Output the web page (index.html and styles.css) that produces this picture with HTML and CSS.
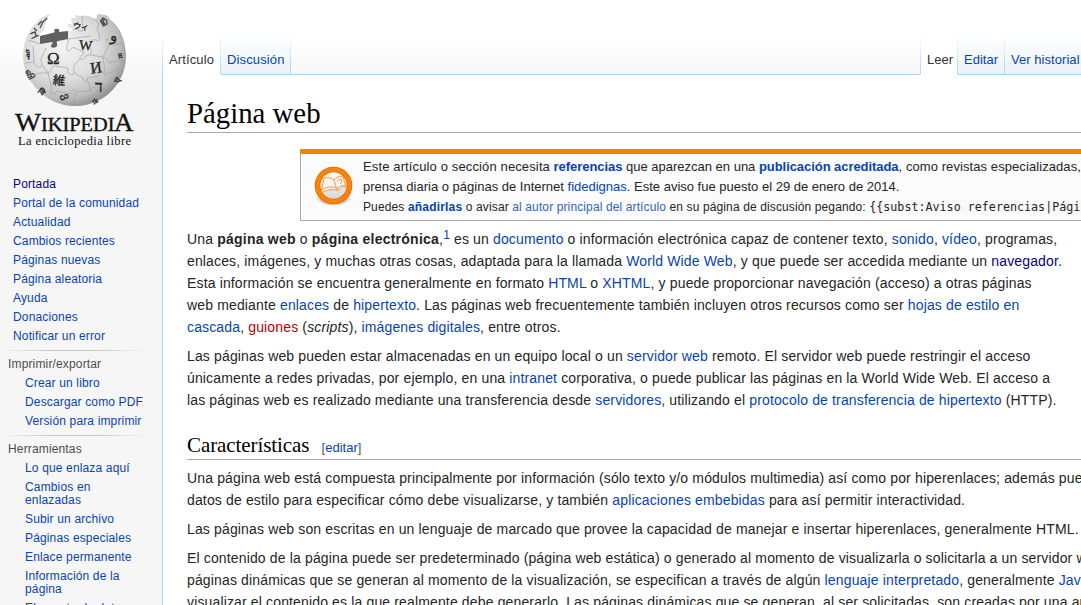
FILE: index.html
```html
<!DOCTYPE html>
<html lang="es">
<head>
<meta charset="utf-8">
<title>Página web - Wikipedia, la enciclopedia libre</title>
<link rel="stylesheet" href="styles.css">
</head>
<body>
<div class="page">
  <aside class="sidebar">
    <a class="logo" href="#">
      <svg width="162" height="160" viewBox="0 0 162 160" role="img" aria-label="Wikipedia">
        <defs>
          <radialGradient id="ball" cx="0.38" cy="0.36" r="0.7">
            <stop offset="0" stop-color="#f4f4f4"/>
            <stop offset="0.5" stop-color="#dedede"/>
            <stop offset="0.8" stop-color="#bcbcbc"/>
            <stop offset="1" stop-color="#858585"/>
          </radialGradient>
        </defs>
        <path d="M50.500 14 C38 17 27 31 24 46 C18 76 43 106 75 106 C105 106 127 82 126 54 C125 39 120 28 112 21 C109 19 108 15 105 15 L98 14 C96 16 98 18 95 19 C89 15 84 15 79 16 C77 14 74 15 76 18 L71 18 L72 24 C69 23 66 25 68 27 C70 29 73 26 72 31 L58 33 L40 36 C39 33 43 32 45 28 C44 25 46 22 48 20 C47 17 49 17 50.500 14Z" fill="url(#ball)"/>
        <path d="M40 36 L54 32.500 C56 32 53 30 55 29 C58 28 60 29 59 32 L68 31 L68 39 L58 41 C55 42 58 44 57 46 C55 48.500 51 48 51 46 C51 44 54 43 52 42 L40 44Z" fill="#606060"/>
        <g class="seam">
          <path d="M28 40 L40 44 M68 39 C69 45 65 47 67 50 C72 53 70 46 75 48 L84 52 C83 57 79 55 80 59 C85 61 84 54 91 55 L103 57 M82 16 C82 24 84 27 82 31 C78 32 77 28 73 30 M91 54 C92 48 88 47 91 41 C96 37 98 44 100 38 L97 28 C101 24 96 21 95 19 M68 39 L91 36"/>
          <path d="M25 63 L34 62 C36 66 38 69 42 66 C43 62 39 61 42 57 C45 51 43 54 46 48 M43 66 L48 73 C53 70 50 67 55 66 L68 68 C66 74 72 77 74 73 C75 70 72 70 75 64 L80 59 M30 80 C37 77 34 74 40 73 L48 73 M48 73 L52 89 C47 94 55 95 57 91 L70 94 C70 89 74 89 76 92 L91 91 C91 85 97 86 98 94 L110 84"/>
          <path d="M74 73 L83 78 C84 84 89 83 87 78 L99 76 C98 70 102 68 105 75 L119 69 M103 57 L105 73 M103 57 C109 59 106 64 112 62 L124 60 M103 57 L109 45 C104 41 107 34 111 44 L123 44 M87 79 L91 91 M76 93 L73 104 M99 92 L94 101 M34 62 L33 46"/>
        </g>
        <g class="glyphs">
          <text x="47" y="64" font-size="17">Ω</text>
          <text x="79" y="50" font-size="14" transform="rotate(4 85 45)">W</text>
          <text x="90" y="73" font-size="16" transform="rotate(-8 96 67)">И</text>
          <text x="53" y="85" font-size="12.500" transform="rotate(5 60 80)">維</text>
          <text x="95" y="92" font-size="16">ד</text>
          <text x="73" y="29" font-size="8" transform="rotate(8 79 26)">ウィ</text>
          <text x="110" y="41" font-size="15">و</text>
          <text x="29" y="38" font-size="9" transform="rotate(-25 34 34)">ユ</text>
          <text x="24" y="58" font-size="10" transform="rotate(85 29 54)">ሙ</text>
          <text x="26" y="78" font-size="9" transform="rotate(65 31 74)">வி</text>
          <text x="62" y="102" font-size="11" transform="rotate(70 67 98)">ვ</text>
          <text x="117" y="59" font-size="7" transform="rotate(80 121 57)">ш</text>
          <text x="114" y="81" font-size="9" transform="rotate(-60 119 78)">ए</text>
          <text x="92" y="103" font-size="7" transform="rotate(-25 96 100)">ik</text>
          <text x="38" y="95" font-size="8" transform="rotate(42 42 92)">वि</text>
        </g>
        <path class="mark" d="M100.500 21 L103 18 L106.500 20 L107 24 L103.500 26 Z M101 20 L106 25 M104 18 L103 26 M38 25 L42 21 M40 28 L43 22 L47 18 M34 28 L37 31"/>
        <g class="wordmark">
          <text x="15" y="131" font-size="26" textLength="26" lengthAdjust="spacingAndGlyphs">W</text>
          <text x="41" y="131" font-size="19.500" textLength="73.500" lengthAdjust="spacingAndGlyphs">IKIPEDI</text>
          <text x="114" y="131" font-size="26" textLength="19.500" lengthAdjust="spacingAndGlyphs">A</text>
        </g>
        <text class="tagline" x="18" y="145" font-size="12.500" textLength="113">La enciclopedia libre</text>
      </svg>
    </a>
    <ul class="menu menu-main">
      <li><a class="visited" href="#">Portada</a></li>
      <li><a href="#">Portal de la comunidad</a></li>
      <li><a href="#">Actualidad</a></li>
      <li><a href="#">Cambios recientes</a></li>
      <li><a href="#">Páginas nuevas</a></li>
      <li><a href="#">Página aleatoria</a></li>
      <li><a href="#">Ayuda</a></li>
      <li><a href="#">Donaciones</a></li>
      <li><a href="#">Notificar un error</a></li>
    </ul>
    <section class="portal">
      <h3>Imprimir/exportar</h3>
      <ul class="menu">
        <li><a href="#">Crear un libro</a></li>
        <li><a href="#">Descargar como PDF</a></li>
        <li><a href="#">Versión para imprimir</a></li>
      </ul>
    </section>
    <section class="portal">
      <h3>Herramientas</h3>
      <ul class="menu">
        <li><a href="#">Lo que enlaza aquí</a></li>
        <li><a href="#">Cambios en<br>enlazadas</a></li>
        <li><a href="#">Subir un archivo</a></li>
        <li><a href="#">Páginas especiales</a></li>
        <li><a href="#">Enlace permanente</a></li>
        <li><a href="#">Información de la<br>página</a></li>
        <li><a href="#">Elemento de datos</a></li>
      </ul>
    </section>
  </aside>
  <div class="main">
    <nav class="tabs">
      <a class="tab selected tab-article" href="#">Artículo</a>
      <a class="tab tab-talk" href="#">Discusión</a>
      <span class="tab-space"></span>
      <a class="tab selected tab-read" href="#">Leer</a>
      <a class="tab tab-edit" href="#">Editar</a>
      <a class="tab tab-history" href="#">Ver historial</a>
    </nav>
    <main class="content">
      <h1>Página web</h1>
      <div class="notice">
        <svg class="notice-icon" width="42" height="44" viewBox="0 0 42 44" aria-hidden="true">
          <defs>
            <radialGradient id="shade"><stop offset="0.6" stop-color="#777" stop-opacity="0.7"/><stop offset="1" stop-color="#999" stop-opacity="0"/></radialGradient>
            <linearGradient id="disc" x1="0" y1="0" x2="0" y2="1"><stop offset="0" stop-color="#fff"/><stop offset="1" stop-color="#d4d4d4"/></linearGradient>
          </defs>
          <ellipse cx="20.500" cy="34" rx="18" ry="8" fill="url(#shade)"/>
          <circle cx="20.500" cy="21.500" r="16" fill="url(#disc)" stroke="#d96a00" stroke-width="5.600"/>
          <circle cx="20.500" cy="21.500" r="16" fill="none" stroke="#ff8208" stroke-width="4.200"/>
          <path d="M11 14 C15 13 18 14 21 16 C23 13 27 12 30 13 L33 23 C29 22 27 23 25 27 C20 24 14 26 9 28.500 L8.500 26 Z M21 16 L24 26 M9 26 C15 22 20 22 24.500 25 C27 21 30 21 33 22 M24 17 L28 15 L29 18 L27 20" fill="#f8f4f0" stroke="#f89a40" stroke-width="1"/>
        </svg>
        <div class="notice-text">
          <span class="loose">Este artículo o sección necesita</span> <a href="#"><b>referencias</b></a> que aparezcan en una <a href="#"><b>publicación acreditada</b></a><span class="loose-end">, como revistas especializadas,</span><br>
          prensa diaria o páginas de Internet <a href="#">fidedignas</a>. Este aviso fue puesto el 29 de enero de 2014.<br>
          <span class="notice-small">Puedes <a href="#"><b>añadirlas</b></a> o avisar <a class="external" href="#">al autor principal del artículo</a> en su página de discusión pegando: <code>{{subst:Aviso referencias|Página web}}</code></span>
        </div>
      </div>
      <p>Una <b>página web</b> o <b>página electrónica</b>,<sup><a href="#">1</a></sup> es un <a href="#">documento</a> o información electrónica capaz de contener texto, <a href="#">sonido</a>, <a href="#">vídeo</a>, programas,<br>
      enlaces, imágenes, y muchas otras cosas, adaptada para la llamada <a href="#">World Wide Web</a>, y que puede ser accedida mediante un <a class="visited" href="#">navegador</a>.<br>
      Esta información se encuentra generalmente en formato <a href="#">HTML</a> o <a href="#">XHTML</a>, y puede proporcionar navegación (acceso) a otras páginas<br>
      web mediante <a href="#">enlaces</a> de <a href="#">hipertexto</a>. Las páginas web frecuentemente también incluyen otros recursos como ser <a href="#">hojas de estilo en<br>
      cascada</a>, <a class="missing" href="#">guiones</a> (<i>scripts</i>), <a href="#">imágenes digitales</a>, entre otros.</p>
      <p>Las páginas web pueden estar almacenadas en un equipo local o un <a href="#">servidor web</a> remoto. El servidor web puede restringir el acceso<br>
      únicamente a redes privadas, por ejemplo, en una <a href="#">intranet</a> corporativa, o puede publicar las páginas en la World Wide Web. El acceso a<br>
      las páginas web es realizado mediante una transferencia desde <a href="#">servidores</a>, utilizando el <a href="#">protocolo de transferencia de hipertexto</a> (HTTP).</p>
      <h2>Características <span class="edit">[<a href="#">editar</a>]</span></h2>
      <p>Una página web está compuesta principalmente por información (sólo texto y/o módulos multimedia) así como por hiperenlaces; además puede<br>
      datos de estilo para especificar cómo debe visualizarse, y también <a href="#">aplicaciones embebidas</a> para así permitir interactividad.</p>
      <p>Las páginas web son escritas en un lenguaje de marcado que provee la capacidad de manejar e insertar hiperenlaces, generalmente HTML.</p>
      <p>El contenido de la página puede ser predeterminado (página web estática) o generado al momento de visualizarla o solicitarla a un servidor web.<br>
      páginas dinámicas que se generan al momento de la visualización, se especifican a través de algún <a href="#">lenguaje interpretado</a>, generalmente <a href="#">JavaScript</a><br>
      visualizar el contenido es la que realmente debe generarlo. Las páginas dinámicas que se generan, al ser solicitadas, son creadas por una aplicación</p>
    </main>
  </div>
</div>
</body>
</html>
```

FILE: styles.css
```css
* { box-sizing: border-box; }
body {
  margin: 0;
  height: 605px;
  overflow: hidden;
  background: #f6f6f6 linear-gradient(#fff 40px, #f6f6f6 80px) top / 100% 80px no-repeat;
  font-family: "Liberation Sans", Arial, sans-serif;
  font-size: 14px;
  color: #252525;
}
a { color: #0645ad; text-decoration: none; }
a.visited { color: #0b0080; }
a.missing { color: #ba0000; }
a.external { color: #36b; }

.page { display: flex; height: 605px; overflow: hidden; }

/* Left column */
.sidebar { flex: none; width: 162px; font-size: 12px; line-height: 13px; letter-spacing: 0.15px; white-space: nowrap; }
.logo, .logo svg { display: block; letter-spacing: 0; }
.seam path { fill: none; stroke: #a2a2a2; stroke-width: 0.7; }
.glyphs { font-family: "Liberation Serif", "DejaVu Serif", "DejaVu Sans", "Noto Sans CJK JP", serif; fill: #222; stroke: #222; stroke-width: 0.3; }
.mark { fill: none; stroke: #444; stroke-width: 1.2; }
.wordmark { font-family: "Liberation Serif", serif; fill: #111; stroke: #111; stroke-width: 0.35; }
.tagline { font-family: "Liberation Serif", serif; fill: #111; }
.menu { list-style: none; margin: 0; padding: 0 0 0 25px; }
.menu li { padding: 3px 0; }
.menu-main { padding: 15px 0 4px 13px; }
.portal { padding-bottom: 4px; background: linear-gradient(90deg, rgba(200,200,200,0), #c8c8c8 33%, #c8c8c8 66%, rgba(200,200,200,0)) 0 0 / 148px 1px no-repeat; }
.portal h3 { margin: 0; padding: 8px 0 3px 8px; font-size: 12px; font-weight: normal; color: #4d4d4d; }

/* Right column */
.main { flex: 1; min-width: 0; display: flex; flex-direction: column; }
.tabs {
  flex: none;
  display: flex;
  height: 75px;
  padding-top: 35px;
  font-size: 13px;
  line-height: 50px;
  white-space: nowrap;
  background: linear-gradient(rgba(167,215,249,0), #a7d7f9) 0 35px / 1px 40px no-repeat;
}
.tab {
  flex: none;
  padding: 0 0 0 6px;
  border-bottom: 1px solid #a7d7f9;
  background: linear-gradient(rgba(167,215,249,0), #a7d7f9) right / 1px 100% no-repeat, linear-gradient(#fff, #e8f2f8);
}
.tab.selected {
  padding-left: 7px;
  color: #333;
  border-bottom-color: #fff;
  background: linear-gradient(rgba(167,215,249,0), #a7d7f9) left / 1px 100% no-repeat, linear-gradient(rgba(167,215,249,0), #a7d7f9) right / 1px 100% no-repeat, #fff;
}
.tab-article { width: 59px; letter-spacing: 0.13px; }
.tab-talk { width: 70px; letter-spacing: 0.13px; }
.tab-space { flex: 1; border-bottom: 1px solid #a7d7f9; }
.tab-read { width: 38px; }
.tab-edit { width: 47px; }
.tab-history { width: 76px; margin-right: 0; background: linear-gradient(#fff, #e8f2f8); letter-spacing: 0.05px; }
.content {
  flex: 1;
  min-height: 0;
  overflow: hidden;
  padding: 20px 0 0 24px;
  border-left: 1px solid #a7d7f9;
  background: #fff;
  white-space: nowrap;
  line-height: 22px;
}
h1, h2 { font-family: "Liberation Serif", serif; font-weight: normal; color: #000; border-bottom: 1px solid #aaa; }
h1 { margin: 0 0 16px; height: 38px; font-size: 28.8px; line-height: 36px; }
h2 { margin: 0 0 7px; padding-top: 11px; height: 42px; font-size: 21px; line-height: 32px; letter-spacing: -0.08px; }
.edit { margin-left: 7px; font: 13px/1 "Liberation Sans", Arial, sans-serif; letter-spacing: 0; color: #555; }
p { margin: 0 0 7px; letter-spacing: 0.145px; }
p b { letter-spacing: 0.24px; }
sup { font-size: 12px; line-height: 1; vertical-align: 5px; }
.notice {
  display: flex;
  margin: 0 0 7px 113px;
  height: 72px;
  border: solid #aaa;
  border-width: 0 0 1px 1px;
  border-top: 5px solid #f28500;
  background: #fbfbfb;
  font-size: 13px;
  line-height: 20px;
}
.notice-icon { flex: none; margin: 10px 8px 0 12px; }
.notice-text { padding-top: 3px; }
.notice-text b { letter-spacing: -0.06px; }
.loose { letter-spacing: 0.13px; }
.loose-end { letter-spacing: 0.08px; }
.notice-small { font-size: 12px; letter-spacing: 0.12px; }
.notice-small b { letter-spacing: 0.2px; }
code { font-family: "DejaVu Sans Mono", monospace; font-size: 11.7px; line-height: 1; letter-spacing: 0; background: #f9f9f9; }
```
